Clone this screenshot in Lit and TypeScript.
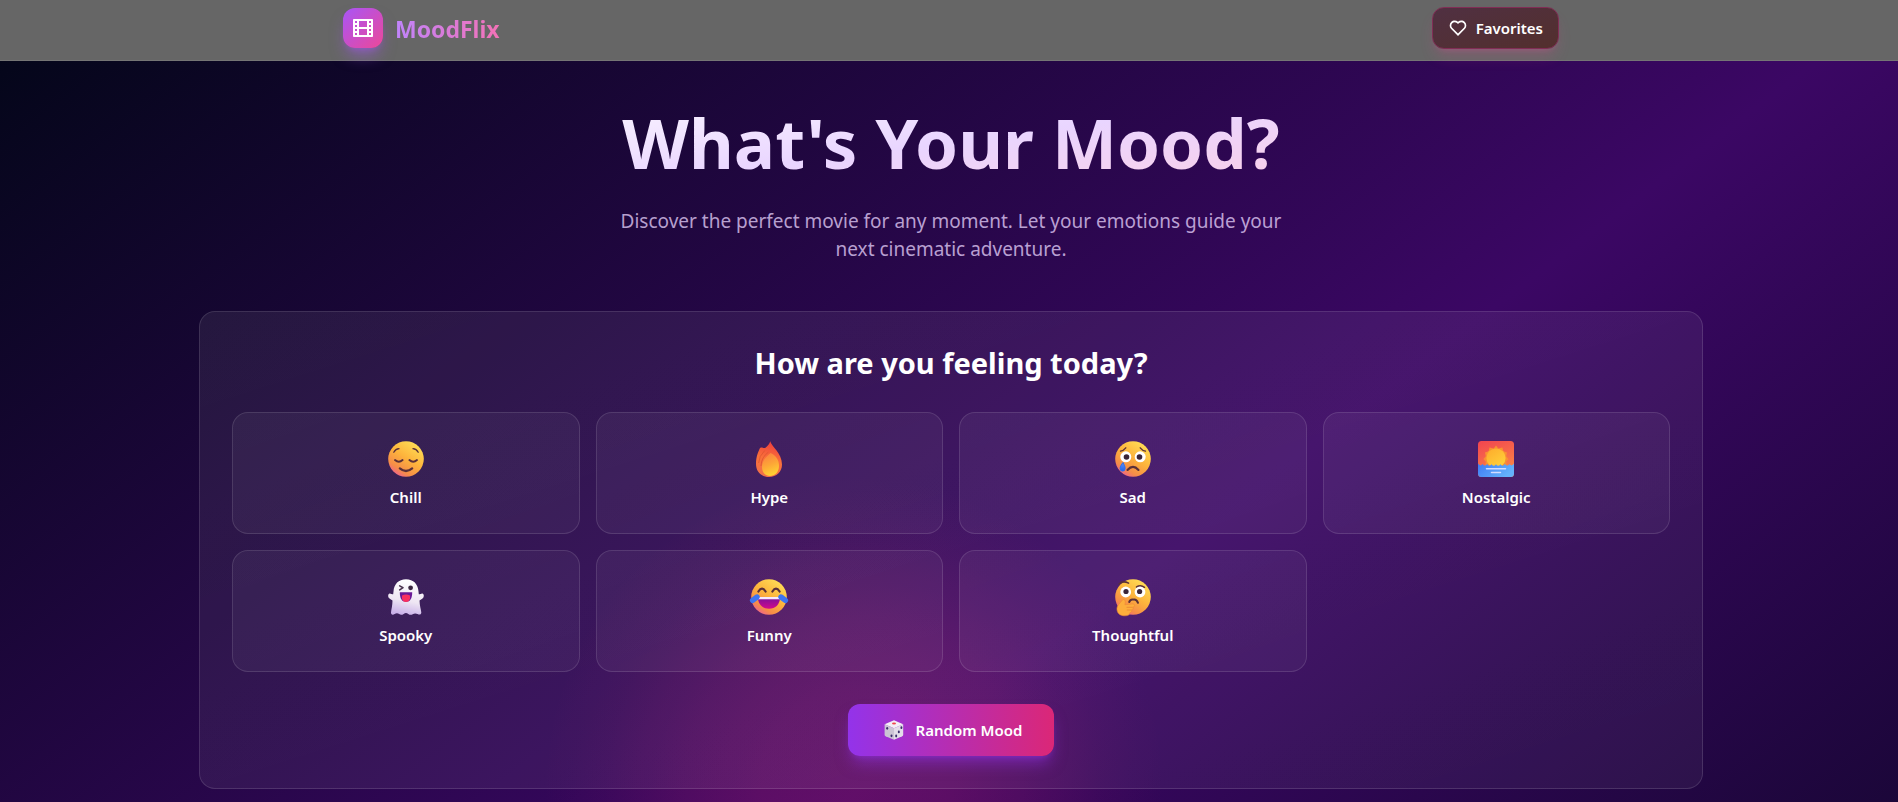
import { LitElement, html, svg, css, type TemplateResult } from "lit";
import { customElement } from "lit/decorators.js";

const faceDefs = svg`
  <defs>
    <linearGradient id="face" x1="0.85" y1="0.1" x2="0.25" y2="1">
      <stop offset="0" stop-color="#ffdc55" />
      <stop offset="0.45" stop-color="#fdb43c" />
      <stop offset="0.8" stop-color="#f58c48" />
      <stop offset="1" stop-color="#ee5f94" />
    </linearGradient>
    <linearGradient id="tear" x1="0" y1="0" x2="0" y2="1">
      <stop offset="0" stop-color="#5c8dfb" />
      <stop offset="1" stop-color="#2466e8" />
    </linearGradient>
    <linearGradient id="mouth" x1="0" y1="0" x2="0" y2="1">
      <stop offset="0" stop-color="#7a0f9a" />
      <stop offset="1" stop-color="#d3088c" />
    </linearGradient>
  </defs>
  <circle cx="18" cy="18" r="17.8" fill="url(#face)" />`;

const chill = svg`${faceDefs}
  <g fill="none" stroke="#5a3038" stroke-linecap="round">
    <path d="M5.8 11.2Q7.6 8 11 7.7M25 7.7Q28.4 8 30.2 11.2" stroke-width="1.3" />
    <path d="M7 19Q10.8 22.3 14.6 19M21.4 19Q25.2 22.3 29 19" stroke-width="1.9" />
    <path d="M11.8 27.4Q18 32.6 24.2 27.4" stroke-width="2.2" />
  </g>`;

const hype = svg`
  <defs>
    <linearGradient id="flameOuter" x1="0.6" y1="0" x2="0.4" y2="1">
      <stop offset="0" stop-color="#ee3d3d" />
      <stop offset="0.5" stop-color="#f9703a" />
      <stop offset="1" stop-color="#f0704a" />
    </linearGradient>
    <linearGradient id="flameInner" x1="0.3" y1="0" x2="0.6" y2="1">
      <stop offset="0" stop-color="#fb8040" />
      <stop offset="0.5" stop-color="#fda637" />
      <stop offset="1" stop-color="#ffd632" />
    </linearGradient>
  </defs>
  <path d="M19.2 0.2C20.5 5.5 31 12 31 23.5C31 31 25.5 36 18 36C10 36 5 30.5 5 23C5 15 7.5 11 8.6 7.8C9.2 6.4 10.6 6.4 11.8 6.8C13 7.2 14 7 14.8 6.4C17.2 4.8 18.6 2.4 19.2 0.2Z" fill="url(#flameOuter)" />
  <path d="M7.6 22Q7.8 15 13.8 9.5M10 25Q10.4 16 17.4 11.2" fill="none" stroke="#d9532f" stroke-width="1" opacity="0.7" />
  <path d="M19.6 12C25 14 28.4 20 28 25.5C27.6 31.5 23.8 35 19 35C14.2 35 11 31.2 11 26C11 19.5 15.6 15.4 19.6 12Z" fill="url(#flameInner)" />`;

const sad = svg`${faceDefs}
  <g fill="none" stroke="#5a3038" stroke-linecap="round">
    <path d="M5.5 10.2Q8.6 9.5 10.8 6.8M25.2 6.8Q27.4 9.5 30.5 10.2" stroke-width="1.3" />
    <path d="M12.5 29Q18 22.8 23.5 29" stroke-width="2.1" />
  </g>
  <circle cx="10.8" cy="15.8" r="5.5" fill="#fff" />
  <circle cx="25.2" cy="15.8" r="5.5" fill="#fff" />
  <circle cx="11.5" cy="16" r="2.8" fill="#3a2638" />
  <circle cx="24.5" cy="16" r="2.8" fill="#3a2638" />
  <path d="M8 21.5C9.3 24 10.1 25.5 10.1 27.5A2.5 2.6 0 0 1 5.1 27.5C5.1 25.2 6.4 23.8 8 21.5Z" fill="url(#tear)" stroke="#2f6fee" />`;

const nostalgic = svg`
  <defs>
    <linearGradient id="dusk" x1="0.2" y1="0" x2="0.6" y2="1">
      <stop offset="0" stop-color="#f2484f" />
      <stop offset="1" stop-color="#fb8a45" />
    </linearGradient>
    <linearGradient id="sea" x1="0" y1="0" x2="1" y2="0.4">
      <stop offset="0" stop-color="#3f7bf4" />
      <stop offset="1" stop-color="#64b2fb" />
    </linearGradient>
    <linearGradient id="sun" x1="0" y1="0" x2="0.7" y2="1">
      <stop offset="0" stop-color="#fdaa2c" />
      <stop offset="1" stop-color="#ffd03a" />
    </linearGradient>
  </defs>
  <rect width="36" height="36" rx="3.5" fill="url(#dusk)" />
  <path d="M18 4.6L20.3 7.4L24.4 6.6L25.4 10.2L29 11.4L28.2 15.2L30.6 18L28.2 20.8L28.8 26H7.2L7.8 20.8L5.4 18L7.8 15.2L7 11.4L10.6 10.2L11.6 6.6L15.7 7.4Z" fill="#f99232" />
  <circle cx="18" cy="17" r="9.6" fill="url(#sun)" />
  <path d="M0 22.6Q2.2 26 4.6 23Q6.8 26.2 9.1 23Q11.4 26.2 13.6 23.2Q15.8 26.2 18 23.2Q20.2 26.2 22.4 23.2Q24.6 26.2 26.9 23Q29.2 26.2 31.4 23Q33.8 26 36 22.6V32.5A3.5 3.5 0 0 1 32.5 36H3.5A3.5 3.5 0 0 1 0 32.5Z" fill="url(#sea)" />
  <path d="M8.5 27.8H27.5M13.5 31.5H22.5" stroke="#d3dcff" stroke-width="1.5" stroke-linecap="round" />`;

const spooky = svg`
  <defs>
    <linearGradient id="sheet" x1="0.6" y1="0" x2="0.4" y2="1">
      <stop offset="0" stop-color="#ffffff" />
      <stop offset="0.6" stop-color="#eee6f3" />
      <stop offset="1" stop-color="#c8afe8" />
    </linearGradient>
  </defs>
  <path d="M18 0.3C25.5 0.3 30 5.2 30.5 12.5L30.8 15.3C32.2 15.3 33.2 14.3 34.3 14.4C36.2 14.7 36.2 17.8 34.8 19.2C33.7 20.3 32.4 21 31.5 21.5C31.6 26.3 33 30.5 33.3 33.6C33.4 35.5 31.5 36.2 29.6 35.1C27.8 34 26.2 34.3 24.7 35.2C23 36.2 21.6 35.8 20.3 34.9C18.5 33.7 17.3 33.8 15.6 34.9C14.2 35.9 12.6 36.1 11.2 35.1C9.7 34.1 8.2 34.1 6.6 35.1C4.6 36.3 2.8 35.5 3 33.6C3.3 30.6 4.5 26.2 4.5 21.5C3.6 21 2.3 20.3 1.2 19.2C-0.2 17.8-0.2 14.7 1.7 14.4C2.8 14.3 3.8 15.3 5.2 15.3L5.5 12.5C6 5.2 10.5 0.3 18 0.3Z" fill="url(#sheet)" />
  <path d="M11.7 6.9L15 8.7L11.7 10.8" fill="none" stroke="#49324d" stroke-width="1.6" stroke-linecap="round" stroke-linejoin="round" />
  <circle cx="22.6" cy="8.8" r="2.4" fill="#3b2740" />
  <path d="M11.8 13.2H24.2C24.2 19.4 22.3 22.7 18 22.7C13.7 22.7 11.8 19.4 11.8 13.2Z" fill="#6a1a96" />
  <path d="M14 16.5Q18 14.5 22 16.5V19.5Q21.2 23 18 23Q14.8 23 14 19.5Z" fill="#f8305f" />`;

const funny = svg`${faceDefs}
  <path d="M7.4 12.5Q11 6.6 14.6 12.5M21.4 12.5Q25 6.6 28.6 12.5" fill="none" stroke="#5a3038" stroke-width="2.2" stroke-linecap="round" />
  <path d="M7 18.6H29C29 25.4 24.5 29.8 18 29.8C11.5 29.8 7 25.4 7 18.6Z" fill="url(#mouth)" />
  <path d="M7 18H29V20.3H7Z" fill="#f5e9ff" />
  <path d="M1.6 21.4L6 18M34.4 21.4L30 18" stroke="#3d75f1" stroke-width="5.4" stroke-linecap="round" />`;

const thoughtful = svg`${faceDefs}
  <g fill="none" stroke="#5a3038" stroke-linecap="round">
    <path d="M4 5Q8 1.2 13.6 4.2M21.5 8Q25.5 5.6 29.5 8.3" stroke-width="1.5" />
    <path d="M14.2 23Q15.5 19.8 18.6 20.6Q21.5 20 23 23.8" stroke-width="2" />
  </g>
  <circle cx="10.7" cy="13" r="5.4" fill="#fff" />
  <circle cx="25" cy="13" r="5.4" fill="#fff" />
  <circle cx="11" cy="12.5" r="2.6" fill="#3a2638" />
  <circle cx="24.6" cy="12.5" r="2.6" fill="#3a2638" />
  <path d="M7.3 21C8.8 19.8 10.7 21.3 10.3 23.2L9.9 25.8L17.2 24.9C20.3 24.8 20.3 27.6 18.2 28C18.7 29.4 17.8 30.6 16.6 30.8C17.2 32.2 16.2 33.4 15 33.5C14.8 35.8 13 36.8 9.7 36.8C4.8 36.8 1.6 34 2 29C2.3 26 5.4 24 6.2 22.5Z" fill="#fdae3c" stroke="#ee8a34" stroke-width="0.6" />
  <path d="M11.5 28.3H17.8M11.8 31H16.4" stroke="#e98533" stroke-width="0.8" />`;

interface Mood {
  name: string;
  art: TemplateResult<2>;
}

const moods: Mood[] = [
  { name: "Chill", art: chill },
  { name: "Hype", art: hype },
  { name: "Sad", art: sad },
  { name: "Nostalgic", art: nostalgic },
  { name: "Spooky", art: spooky },
  { name: "Funny", art: funny },
  { name: "Thoughtful", art: thoughtful },
];

@customElement("app-root")
export class AppRoot extends LitElement {
  static styles = css`
    :host {
      display: block;
      box-sizing: border-box;
      min-height: 100vh;
      font-family: "Segoe UI", "Noto Sans", "Open Sans", sans-serif;
      font-size: 15px;
      line-height: 24px;
      color: #fff;
      background:
        radial-gradient(circle 310px at 45% 98vh,
          rgba(219, 39, 119, 0.24) 0%, rgba(219, 39, 119, 0.22) 30%,
          rgba(219, 39, 119, 0.15) 55%, rgba(219, 39, 119, 0.05) 80%,
          rgba(219, 39, 119, 0) 100%),
        linear-gradient(to bottom right, #020617, #3b0764, #020617) 0 0 / 100% 180vh;
    }
    *, *::before, *::after { box-sizing: border-box; }
    h1, h2, p { margin: 0; }
    button { font: inherit; color: inherit; cursor: pointer; }

    .nav {
      background: #666;
      border-bottom: 1px solid #757575;
      padding-left: 4px;
    }
    .nav-inner {
      max-width: 1280px;
      margin: 0 auto;
      padding: 7px 32px 11px;
      display: flex;
      align-items: center;
      justify-content: space-between;
    }
    .brand {
      display: flex;
      align-items: center;
      gap: 12px;
      text-decoration: none;
    }
    .brand-mark {
      width: 40px;
      height: 40px;
      display: grid;
      place-items: center;
      border-radius: 12px;
      color: #fff;
      background: linear-gradient(to bottom right, #a855f7, #ec4899);
      box-shadow: 0 10px 15px -3px rgba(168, 85, 247, 0.5), 0 4px 6px -4px rgba(168, 85, 247, 0.5);
    }
    .brand-name {
      padding-top: 2px;
      font-size: 23px;
      line-height: 32px;
      font-weight: 700;
      color: transparent;
      background: linear-gradient(to right, #c084fc, #f472b6);
      background-clip: text;
      -webkit-background-clip: text;
    }
    .favorites {
      display: flex;
      align-items: center;
      gap: 8px;
      padding: 8px 15px;
      border: 1px solid #812d55;
      border-radius: 12px;
      font-weight: 600;
      background: linear-gradient(to bottom right, #503042, #532f2d);
      box-shadow: 0 10px 15px -3px rgba(236, 72, 153, 0.2), 0 4px 6px -4px rgba(236, 72, 153, 0.3);
    }

    .page {
      max-width: 1540px;
      margin: 0 auto;
      padding: 36px 16px 12px 20px;
    }
    .hero { text-align: center; margin-bottom: 48px; }
    .hero-title {
      width: fit-content;
      margin: 0 auto 20px;
      font-size: 69px;
      line-height: 90px;
      font-weight: 700;
      color: transparent;
      background: linear-gradient(to bottom right, #faf5ff, #e9d5ff, #fbcfe8);
      background-clip: text;
      -webkit-background-clip: text;
    }
    .hero-text {
      max-width: 680px;
      margin: 0 auto;
      font-size: 19px;
      line-height: 28px;
      color: rgba(233, 213, 255, 0.75);
    }

    .picker {
      padding: 32px;
      border: 1px solid rgba(255, 255, 255, 0.12);
      border-radius: 16px;
      background: linear-gradient(to bottom right, rgba(255, 255, 255, 0.07), rgba(255, 255, 255, 0.05));
    }
    .picker-title {
      margin-bottom: 30px;
      text-align: center;
      font-size: 29px;
      line-height: 38px;
      font-weight: 700;
    }
    .moods {
      display: grid;
      grid-template-columns: repeat(4, minmax(0, 1fr));
      gap: 16px;
      margin-bottom: 32px;
    }
    .mood {
      display: flex;
      flex-direction: column;
      align-items: center;
      gap: 8px;
      padding: 28px 24px 24px;
      border: 1px solid rgba(255, 255, 255, 0.12);
      border-radius: 16px;
      font-weight: 600;
      background: linear-gradient(to bottom right, rgba(255, 255, 255, 0.05), rgba(255, 255, 255, 0.04));
    }
    .mood-art { display: block; overflow: visible; }
    .random {
      display: flex;
      align-items: center;
      gap: 8px;
      margin: 0 auto;
      padding: 12px 32px;
      border: 0;
      border-radius: 12px;
      line-height: 28px;
      font-weight: 600;
      background: linear-gradient(to right, #9333ea, #db2777);
      box-shadow: 0 10px 15px -3px rgba(147, 51, 234, 0.5), 0 4px 6px -4px rgba(147, 51, 234, 0.5);
    }
  `;

  render() {
    return html`
      <header class="nav">
        <div class="nav-inner">
          <a class="brand" href="#">
            <span class="brand-mark">
              <svg width="24" height="24" viewBox="0 0 24 24" fill="currentColor" aria-hidden="true">
                <path d="M2 4C2 3.45 2.45 3 3 3H21C21.55 3 22 3.45 22 4V20C22 20.55 21.55 21 21 21H3C2.45 21 2 20.55 2 20V4ZM8 5V11H16V5H8ZM8 13V19H16V13H8ZM4 5V7H6V5H4ZM18 5V7H20V5H18ZM4 9V11H6V9H4ZM18 9V11H20V9H18ZM4 13V15H6V13H4ZM18 13V15H20V13H18ZM4 17V19H6V17H4ZM18 17V19H20V17H18Z" fill-rule="evenodd" />
              </svg>
            </span>
            <span class="brand-name">MoodFlix</span>
          </a>
          <button class="favorites" type="button">
            <svg width="20" height="20" viewBox="0 0 24 24" fill="currentColor" aria-hidden="true">
              <path d="M12.001 4.529C14.35 2.42 17.98 2.49 20.243 4.757C22.505 7.025 22.583 10.637 20.479 12.993L12 21.485L3.521 12.993C1.417 10.637 1.496 7.019 3.757 4.757C6.022 2.493 9.645 2.417 12.001 4.529ZM18.827 6.17C17.328 4.668 14.908 4.607 13.337 6.017L12.002 7.215L10.666 6.018C9.091 4.606 6.675 4.668 5.172 6.172C3.682 7.661 3.607 10.047 4.98 11.623L12 18.654L19.02 11.623C20.394 10.047 20.319 7.665 18.827 6.17Z" fill-rule="evenodd" />
            </svg>
            Favorites
          </button>
        </div>
      </header>
      <main class="page">
        <section class="hero">
          <h1 class="hero-title">What's Your Mood?</h1>
          <p class="hero-text">
            Discover the perfect movie for any moment. Let your emotions guide your next cinematic adventure.
          </p>
        </section>
        <section class="picker">
          <h2 class="picker-title">How are you feeling today?</h2>
          <div class="moods">
            ${moods.map(
              (mood) => html`
                <button class="mood" type="button">
                  <svg class="mood-art" width="36" height="36" viewBox="0 0 36 36" aria-hidden="true">${mood.art}</svg>
                  <span>${mood.name}</span>
                </button>
              `,
            )}
          </div>
          <button class="random" type="button">
            <svg width="28" height="20" viewBox="-4 0 28 20" aria-hidden="true">
              <path d="M10 0.3L19.2 4.2L10 8.2L0.6 4.2Z" fill="#f3eef6" />
              <path d="M0.6 4.2L10 8.2V19.8L1.6 16.2Q0.6 15.7 0.6 14.7Z" fill="#cbc3d4" />
              <path d="M19.2 4.2L10 8.2V19.8L18.2 16.2Q19.2 15.7 19.2 14.7Z" fill="#e3dde9" />
              <ellipse cx="10" cy="3.5" rx="2" ry="1.1" fill="#f0474f" />
              <g fill="#3a2d6b">
                <ellipse cx="3.2" cy="8.3" rx="1" ry="1.4" />
                <ellipse cx="7.5" cy="15.8" rx="1" ry="1.4" />
                <ellipse cx="17.4" cy="7.7" rx="1" ry="1.4" />
                <ellipse cx="14.8" cy="11.9" rx="1" ry="1.4" />
                <ellipse cx="12.2" cy="16" rx="1" ry="1.4" />
              </g>
            </svg>
            Random Mood
          </button>
        </section>
      </main>
    `;
  }
}
